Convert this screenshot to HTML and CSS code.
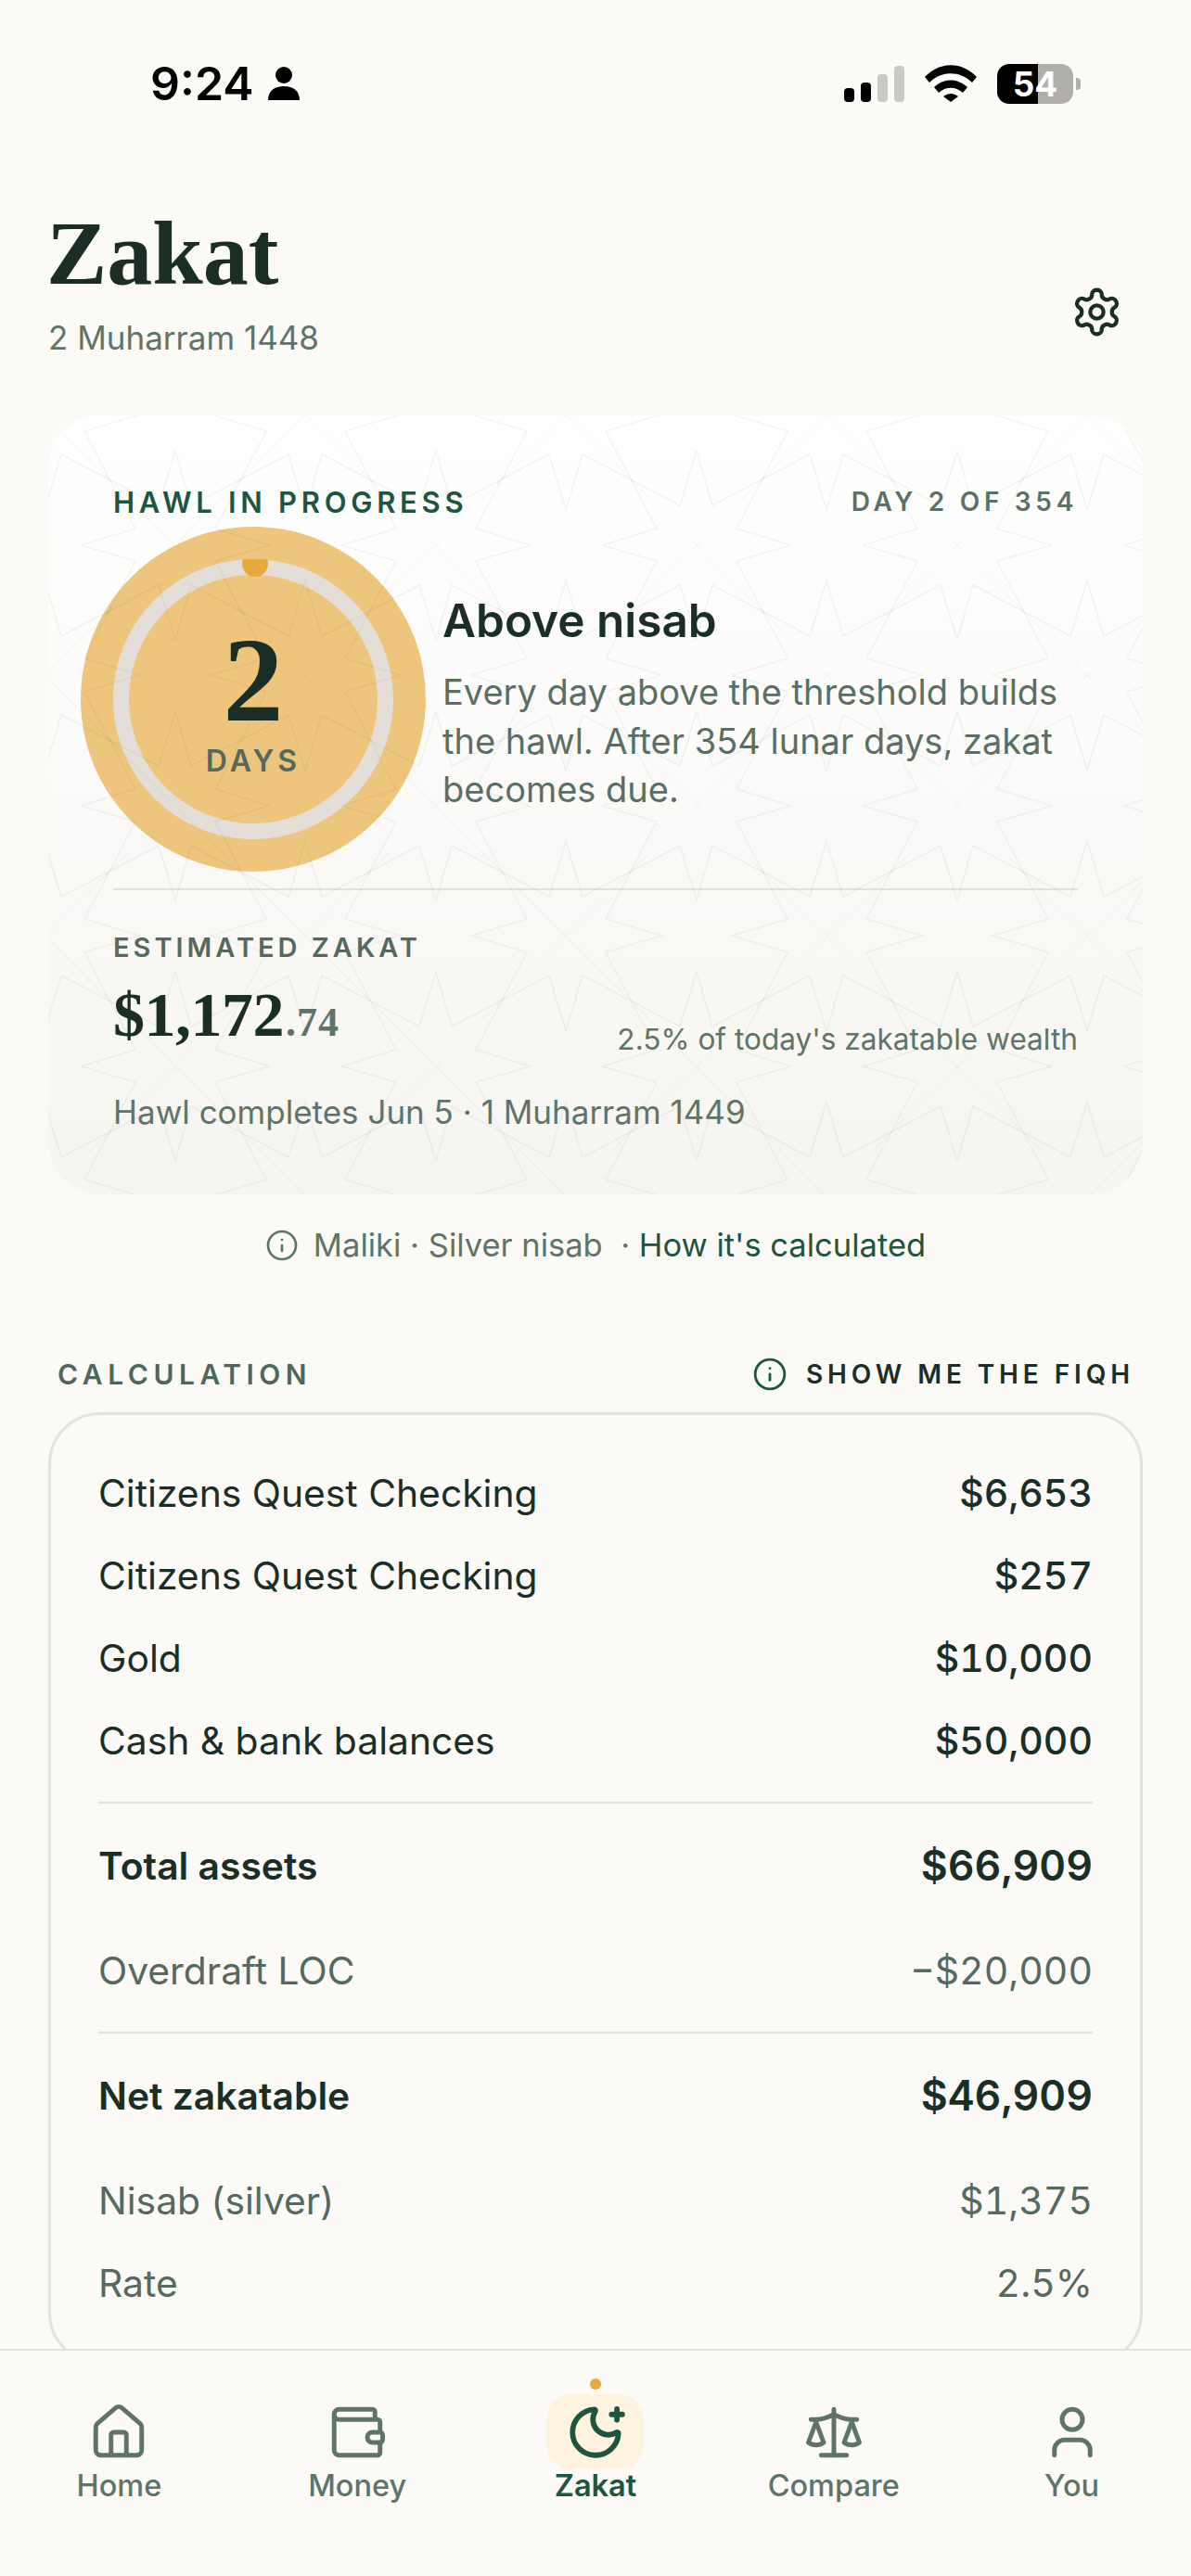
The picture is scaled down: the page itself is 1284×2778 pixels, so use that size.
FILE: index.html
```html
<!DOCTYPE html>
<html lang="en">
<head>
  <meta charset="UTF-8">
  <title>Zakat</title>
  <link rel="stylesheet" href="styles.css">
</head>
<body>
  <div class="page">
    <main class="content">
      <div class="statusbar">
        <div class="status-left">
          <span class="time">9:24</span>
          <svg class="person" viewBox="0 0 34 36"><circle cx="17" cy="9" r="9"/><path d="M0 36c0-10 7-15 17-15s17 5 17 15z"/></svg>
        </div>
        <div class="status-right">
          <div class="signal">
            <span class="bar bar1"></span>
            <span class="bar bar2"></span>
            <span class="bar bar3"></span>
            <span class="bar bar4"></span>
          </div>
          <svg class="wifi" viewBox="0 0 56 40"><path d="M0 13C16-4 40-4 56 13l-5 6C38 6 18 6 5 19z"/><path d="M10 24c11-10 25-10 36 0l-5 6c-8-7-18-7-26 0z"/><path d="M20 34c5-4 11-4 16 0l-8 6z"/></svg>
          <div class="battery"><span>54</span></div>
          <span class="battery-nub"></span>
        </div>
      </div>

      <header class="header">
        <div>
          <h1>Zakat</h1>
          <p class="hijri">2 Muharram 1448</p>
        </div>
        <svg class="gear" viewBox="0 0 24 24"><path d="M12.22 2h-.44a2 2 0 0 0-2 2v.18a2 2 0 0 1-1 1.73l-.43.25a2 2 0 0 1-2 0l-.15-.08a2 2 0 0 0-2.73.73l-.22.38a2 2 0 0 0 .73 2.73l.15.1a2 2 0 0 1 1 1.72v.51a2 2 0 0 1-1 1.74l-.15.09a2 2 0 0 0-.73 2.73l.22.38a2 2 0 0 0 2.73.73l.15-.08a2 2 0 0 1 2 0l.43.25a2 2 0 0 1 1 1.73V20a2 2 0 0 0 2 2h.44a2 2 0 0 0 2-2v-.18a2 2 0 0 1 1-1.73l.43-.25a2 2 0 0 1 2 0l.15.08a2 2 0 0 0 2.73-.73l.22-.39a2 2 0 0 0-.73-2.73l-.15-.08a2 2 0 0 1-1-1.74v-.5a2 2 0 0 1 1-1.74l.15-.09a2 2 0 0 0 .73-2.73l-.22-.38a2 2 0 0 0-2.73-.73l-.15.08a2 2 0 0 1-2 0l-.43-.25a2 2 0 0 1-1-1.73V4a2 2 0 0 0-2-2z"/><circle cx="12" cy="12" r="3"/></svg>
      </header>

      <section class="hawl-card">
        <div class="hawl-top">
          <span class="hawl-label">HAWL IN PROGRESS</span>
          <span class="day-count">DAY 2 OF 354</span>
        </div>

        <div class="hawl-row">
          <div class="ring">
            <svg class="ring-svg" viewBox="0 0 302 302">
              <circle class="ring-track" cx="151" cy="151" r="142.5"/>
              <circle class="ring-dot" cx="153" cy="5" r="14"/>
            </svg>
            <div class="ring-num">2</div>
            <div class="ring-days">DAYS</div>
          </div>
          <div class="hawl-text">
            <h3>Above nisab</h3>
            <p>Every day above the threshold builds the hawl. After 354 lunar days, zakat becomes due.</p>
          </div>
        </div>

        <div class="hawl-divider"></div>

        <div class="est-label">ESTIMATED ZAKAT</div>
        <div class="est-row">
          <div class="est-amount">$1,172<span class="cents">.74</span></div>
          <div class="est-note">2.5% of today's zakatable wealth</div>
        </div>
        <div class="est-date">Hawl completes Jun 5 · 1 Muharram 1449</div>

        <svg class="hawl-pattern" width="100%" height="100%">
          <defs>
            <pattern id="stars" x="137" y="140" width="281" height="281" patternUnits="userSpaceOnUse">
              <path class="star-line" d="M0 179 17 238 122 183 140 243 158 183 263 238 281 179"/>
              <path class="star-line" d="M0 102 17 43 122 98 140 38 158 98 263 43 281 102"/>
              <path class="star-line" d="M179 0 238 17 183 122 243 140 183 158 238 263 179 281"/>
              <path class="star-line" d="M102 0 43 17 98 122 38 140 98 158 43 263 102 281"/>
              <path class="star-cross" d="M0 0 281 281M281 0 0 281"/>
            </pattern>
          </defs>
          <rect width="100%" height="100%" fill="url(#stars)"/>
        </svg>
      </section>

      <div class="method">
        <svg class="icon-info" viewBox="0 0 24 24"><circle cx="12" cy="12" r="10"/><path d="M12 16v-4"/><path d="M12 8h.01"/></svg>
        <span>Maliki · Silver nisab &nbsp;· <a class="method-link">How it's calculated</a></span>
      </div>

      <div class="section-head">
        <span class="section-title">CALCULATION</span>
        <span class="fiqh">
          <svg class="icon-fiqh" viewBox="0 0 24 24"><circle cx="12" cy="12" r="10"/><path d="M12 16v-4"/><path d="M12 8h.01"/></svg>
          SHOW ME THE FIQH
        </span>
      </div>

      <section class="calc-card">
        <div class="row"><span>Citizens Quest Checking</span><span class="val">$6,653</span></div>
        <div class="row"><span>Citizens Quest Checking</span><span class="val">$257</span></div>
        <div class="row"><span>Gold</span><span class="val">$10,000</span></div>
        <div class="row"><span>Cash &amp; bank balances</span><span class="val">$50,000</span></div>
        <div class="rule"></div>
        <div class="row total"><span>Total assets</span><span class="val">$66,909</span></div>
        <div class="row muted"><span>Overdraft LOC</span><span class="val">−$20,000</span></div>
        <div class="rule"></div>
        <div class="row total"><span>Net zakatable</span><span class="val">$46,909</span></div>
        <div class="row muted"><span>Nisab (silver)</span><span class="val">$1,375</span></div>
        <div class="row muted"><span>Rate</span><span class="val">2.5%</span></div>
      </section>
    </main>

    <nav class="tabbar">
      <div class="tab">
        <div class="tab-icon">
          <svg viewBox="0 0 24 24"><path d="M15 21v-8a1 1 0 0 0-1-1h-4a1 1 0 0 0-1 1v8"/><path d="M3 10a2 2 0 0 1 .709-1.528l7-5.999a2 2 0 0 1 2.582 0l7 5.999A2 2 0 0 1 21 10v9a2 2 0 0 1-2 2H5a2 2 0 0 1-2-2z"/></svg>
        </div>
        <span>Home</span>
      </div>
      <div class="tab">
        <div class="tab-icon">
          <svg viewBox="0 0 24 24"><path d="M19 7V4a1 1 0 0 0-1-1H5a2 2 0 0 0 0 4h15a1 1 0 0 1 1 1v4h-3a2 2 0 0 0 0 4h3a1 1 0 0 0 1-1v-2a1 1 0 0 0-1-1"/><path d="M3 5v14a2 2 0 0 0 2 2h15a1 1 0 0 0 1-1v-4"/></svg>
        </div>
        <span>Money</span>
      </div>
      <div class="tab active">
        <span class="tab-dot"></span>
        <div class="tab-icon">
          <svg viewBox="0 0 24 24"><path d="M20.985 12.486a9 9 0 1 1-9.473-9.472c.405-.022.617.46.402.803a6 6 0 0 0 8.268 8.268c.344-.215.825-.004.803.401"/><path d="M20.4 2.9v4.2"/><path d="M18.3 5h4.2"/></svg>
        </div>
        <span>Zakat</span>
      </div>
      <div class="tab">
        <div class="tab-icon">
          <svg viewBox="0 0 24 24"><path d="m16 16 3-8 3 8c-.87.65-1.92 1-3 1s-2.13-.35-3-1Z"/><path d="m2 16 3-8 3 8c-.87.65-1.92 1-3 1s-2.13-.35-3-1Z"/><path d="M7 21h10"/><path d="M12 3v18"/><path d="M3 7h2c2 0 5-1 7-2 2 1 5 2 7 2h2"/></svg>
        </div>
        <span>Compare</span>
      </div>
      <div class="tab">
        <div class="tab-icon">
          <svg viewBox="0 0 24 24"><path d="M19 21v-2a4 4 0 0 0-4-4H9a4 4 0 0 0-4 4v2"/><circle cx="12" cy="7" r="4"/></svg>
        </div>
        <span>You</span>
      </div>
    </nav>
  </div>
</body>
</html>
```

FILE: styles.css
```css
* {
  box-sizing: border-box;
  margin: 0;
  padding: 0;
}

body {
  font-family: Inter, "Noto Sans", sans-serif;
  background: #fbfaf6;
  color: #1a2e26;
}

.page {
  height: 100vh;
  display: flex;
  flex-direction: column;
  overflow: hidden;
}

.content {
  flex: 1;
  min-height: 0;
  overflow: hidden;
  padding: 60px 52px 0;
}

/* status bar */
.statusbar {
  height: 60px;
  display: flex;
  justify-content: space-between;
  align-items: center;
  margin: 0 -52px;
  padding: 0 119px 0 162px;
}

.status-left {
  display: flex;
  align-items: center;
  gap: 15px;
}

.time {
  font-size: 50px;
  font-weight: 600;
  color: #000;
}

.person {
  width: 34px;
  height: 36px;
  fill: #000;
}

.status-right {
  display: flex;
  align-items: center;
}

.signal {
  display: flex;
  align-items: flex-end;
  gap: 7px;
  height: 39px;
}

.bar {
  width: 11px;
  border-radius: 4px;
  background: #000;
}

.bar1 { height: 15px; }
.bar2 { height: 21px; }
.bar3 { height: 30px; background: #c9c9c5; }
.bar4 { height: 39px; background: #c9c9c5; }

.wifi {
  width: 56px;
  height: 40px;
  margin-left: 22px;
  fill: #000;
}

.battery {
  width: 82px;
  height: 43px;
  margin-left: 22px;
  border-radius: 13px;
  background: linear-gradient(90deg, #000 54%, #b0afab 54%);
  color: #fff;
  font-size: 37px;
  font-weight: 700;
  display: flex;
  align-items: center;
  justify-content: center;
}

.battery-nub {
  width: 5px;
  height: 13px;
  margin-left: 3px;
  border-radius: 0 4px 4px 0;
  background: #b0afab;
}

/* header */
.header {
  display: flex;
  justify-content: space-between;
  align-items: flex-end;
  margin-top: 103px;
}

h1 {
  margin-left: -2px;
  font-family: "Liberation Serif", serif;
  font-size: 98px;
  font-weight: 700;
  line-height: 100px;
  color: #1a2e26;
}

.hijri {
  margin-top: 19px;
  font-size: 35px;
  line-height: 44px;
  color: #5f7468;
}

.gear {
  width: 57px;
  height: 57px;
  margin: 0 21px 21px 0;
  fill: none;
  stroke: #1a2e26;
  stroke-width: 1.8;
}

/* hawl card */
.hawl-card {
  position: relative;
  margin-top: 62px;
  height: 840px;
  padding: 75px 70px 0;
  border-radius: 56px;
  overflow: hidden;
  background: linear-gradient(180deg, #ffffff, #f7f5f1);
}

.hawl-pattern {
  position: absolute;
  top: 0;
  left: 0;
  pointer-events: none;
}

.star-line {
  fill: none;
  stroke: rgba(40, 60, 50, 0.055);
  stroke-width: 1.6;
}

.star-cross {
  fill: none;
  stroke: rgba(40, 60, 50, 0.03);
  stroke-width: 1.4;
}

.hawl-top {
  display: flex;
  justify-content: space-between;
  align-items: center;
  height: 36px;
}

.hawl-label {
  font-size: 31px;
  font-weight: 600;
  letter-spacing: 4.7px;
  color: #1e5540;
}

.day-count {
  font-size: 28px;
  font-weight: 600;
  letter-spacing: 4.7px;
  color: #5a7266;
}

.hawl-row {
  display: flex;
  align-items: center;
  gap: 53px;
  margin-top: 44px;
}

.ring {
  position: relative;
  flex-shrink: 0;
  width: 302px;
  height: 302px;
  border-radius: 50%;
  background: #eec57c;
  box-shadow: 0 0 0 35px #eec57c;
  display: flex;
  flex-direction: column;
  align-items: center;
}

.ring-svg {
  position: absolute;
  top: 0;
  left: 0;
  width: 302px;
  height: 302px;
}

.ring-track {
  fill: none;
  stroke: #e3dfd8;
  stroke-width: 17;
}

.ring-dot {
  fill: #e8a83a;
}

.ring-num {
  position: relative;
  margin-top: 65px;
  font-family: "Liberation Serif", serif;
  font-size: 130px;
  font-weight: 700;
  line-height: 130px;
  color: #1a2e26;
}

.ring-days {
  position: relative;
  margin-top: 3px;
  font-size: 32px;
  font-weight: 600;
  line-height: 40px;
  letter-spacing: 4px;
  color: #55695c;
}

.hawl-text {
  padding-top: 9px;
}

.hawl-text h3 {
  font-size: 49.5px;
  font-weight: 600;
  line-height: 60px;
  margin-bottom: 21px;
  color: #1a2e26;
}

.hawl-text p {
  font-size: 38px;
  line-height: 52.5px;
  color: #5a6f64;
}

.hawl-divider {
  height: 2px;
  margin-top: 53px;
  background: #e3e1db;
}

.est-label {
  margin-top: 44px;
  font-size: 29px;
  font-weight: 600;
  line-height: 36px;
  letter-spacing: 4px;
  color: #55695c;
}

.est-row {
  display: flex;
  justify-content: space-between;
  align-items: flex-end;
  margin-top: 20px;
}

.est-amount {
  padding-bottom: 4px;
  font-family: "Liberation Serif", serif;
  font-size: 68px;
  font-weight: 700;
  line-height: 68px;
  letter-spacing: -0.5px;
  color: #1a2e26;
}

.cents {
  margin-left: 2px;
  font-size: 44px;
  letter-spacing: 1px;
  color: #5f7468;
}

.est-note {
  font-size: 31.6px;
  line-height: 40px;
  color: #5f7468;
}

.est-date {
  margin-top: 36px;
  font-size: 35px;
  line-height: 44px;
  color: #5f7468;
}

/* method line */
.method {
  display: flex;
  justify-content: center;
  align-items: center;
  gap: 16px;
  margin-top: 33px;
  font-size: 34.5px;
  line-height: 44px;
  color: #5f7468;
}

.method-link {
  color: #1e5540;
}

.icon-info {
  width: 36px;
  height: 36px;
  fill: none;
  stroke: #5f7468;
  stroke-width: 1.8;
  stroke-linecap: round;
}

/* calculation */
.section-head {
  display: flex;
  justify-content: space-between;
  align-items: center;
  height: 38px;
  margin-top: 98px;
  padding: 0 9px 0 10px;
}

.section-title {
  font-size: 30px;
  font-weight: 600;
  letter-spacing: 5.5px;
  color: #4f665a;
}

.fiqh {
  display: flex;
  align-items: center;
  gap: 20px;
  font-size: 28px;
  font-weight: 600;
  letter-spacing: 4.9px;
  color: #1a2e26;
}

.icon-fiqh {
  width: 38px;
  height: 38px;
  fill: none;
  stroke: #1e5540;
  stroke-width: 1.8;
  stroke-linecap: round;
}

.calc-card {
  margin-top: 22px;
  padding: 39.5px 51px 40px;
  border: 3px solid #e4e2dc;
  border-radius: 56px;
}

.row {
  display: flex;
  justify-content: space-between;
  align-items: center;
  height: 89px;
  font-size: 40.8px;
  color: #1a2e26;
}

.val {
  font-size: 41px;
  font-weight: 500;
  font-variant-numeric: tabular-nums;
}

.total {
  font-weight: 600;
  margin-bottom: 24px;
}

.total .val {
  font-size: 44.6px;
  font-weight: 600;
}

.muted {
  color: #55695e;
}

.muted .val {
  font-weight: 400;
}

.rule {
  height: 2px;
  margin: 21px 0 23px;
  background: #e4e2dc;
}

/* bottom tabs */
.tabbar {
  flex-shrink: 0;
  height: 245px;
  padding-top: 47px;
  border-top: 2px solid #e4e2dc;
  display: grid;
  grid-template-columns: repeat(5, 1fr);
  background: #fbfaf6;
}

.tab {
  position: relative;
  display: flex;
  flex-direction: column;
  align-items: center;
  font-size: 32.5px;
  font-weight: 500;
  line-height: 40px;
  color: #5f7468;
}

.tab-icon {
  width: 105px;
  height: 81px;
  margin-bottom: -2px;
  border-radius: 27px;
  display: flex;
  align-items: center;
  justify-content: center;
}

.tab-icon svg {
  width: 66px;
  height: 66px;
  fill: none;
  stroke: #5f7468;
  stroke-width: 1.8;
  stroke-linecap: round;
  stroke-linejoin: round;
}

.active {
  font-weight: 600;
  color: #1e5540;
}

.active .tab-icon {
  background: #fdf3de;
}

.active .tab-icon svg {
  stroke: #1e5540;
  stroke-width: 2.1;
}

.tab-dot {
  position: absolute;
  top: -17px;
  left: 50%;
  width: 12px;
  height: 12px;
  margin-left: -6px;
  border-radius: 50%;
  background: #e8a83a;
}
```
